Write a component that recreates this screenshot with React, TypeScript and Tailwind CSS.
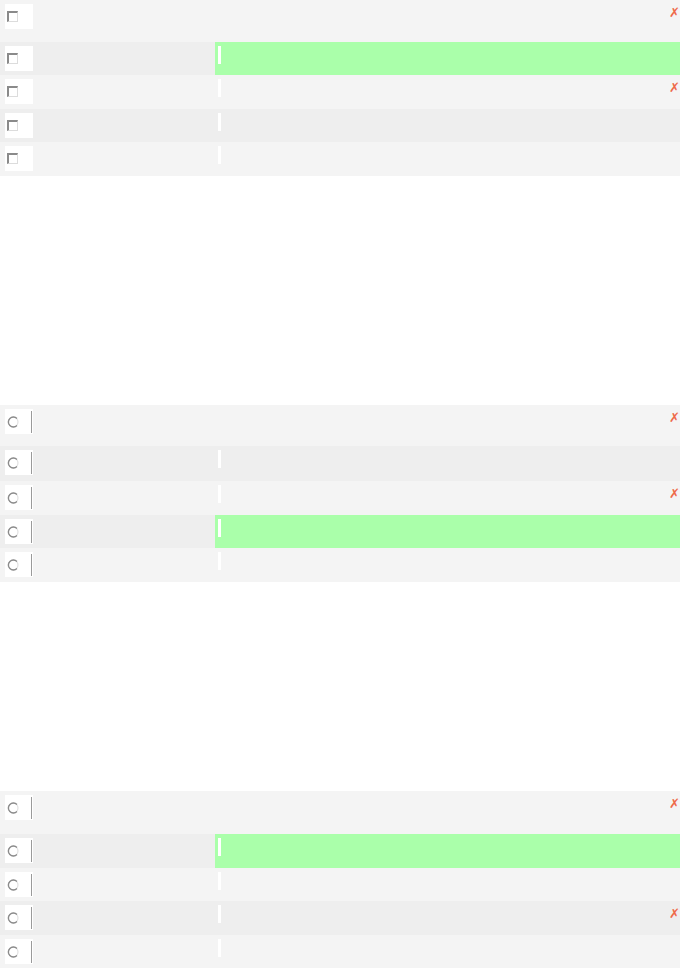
import React from 'react';

type Row = {
  h: number;
  green?: boolean;
  wrong?: boolean;
};

type Section = {
  kind: 'checkbox' | 'radio';
  mt: string;
  rows: Row[];
};

const sections: Section[] = [
  {
    kind: 'checkbox',
    mt: 'mt-0',
    rows: [{ h: 42, wrong: true }, { h: 33, green: true }, { h: 34, wrong: true }, { h: 33 }, { h: 34 }],
  },
  {
    kind: 'radio',
    mt: 'mt-[229px]',
    rows: [{ h: 41, wrong: true }, { h: 35 }, { h: 34, wrong: true }, { h: 33, green: true }, { h: 34 }],
  },
  {
    kind: 'radio',
    mt: 'mt-[209px]',
    rows: [{ h: 43, wrong: true }, { h: 34, green: true }, { h: 33 }, { h: 34, wrong: true }, { h: 33 }],
  },
];

const CheckBox = () => (
  <span className="block w-[11px] h-[11px] border-t-2 border-l-2 border-t-[#8a8a8a] border-l-[#8a8a8a] border-b border-r border-b-[#dcdcdc] border-r-[#dcdcdc] bg-white" />
);

const Radio = () => (
  <svg width="12" height="12" viewBox="0 0 12 12">
    <circle cx="6" cy="6" r="5" fill="white" stroke="#dcdcdc" strokeWidth="1" />
    <path d="M10 2.5 A5 5 0 1 0 10 9.5" fill="none" stroke="#8a8a8a" strokeWidth="1.3" />
  </svg>
);

const QuestionRow = ({ row, index, kind }: { row: Row; index: number; kind: Section['kind'] }) => {
  const bg = index % 2 === 0 ? 'bg-[#f4f4f4]' : 'bg-[#eeeeee]';
  return (
    <div className={`flex ${bg}`} style={{ height: row.h }}>
      <div className="w-[215px] shrink-0 pl-[5px] pt-[4px]">
        <div className="flex h-[25px] w-[28px] items-center bg-white pl-[2px]">
          {kind === 'checkbox' ? (
            <CheckBox />
          ) : (
            <>
              <Radio />
              <span className="ml-auto mr-px h-[22px] w-px bg-[#9a9a9a]" />
            </>
          )}
        </div>
      </div>
      <div className={`flex flex-1 items-start ${row.green ? 'bg-[#aaffaa]' : ''}`}>
        {index > 0 && <span className="ml-[3px] mt-[4px] h-[18px] w-[3px] bg-white" />}
        {row.wrong && (
          <span
            className="ml-auto mt-[6px] text-[13px] leading-none text-[#ee6a4a]"
            style={{ fontFamily: '"DejaVu Sans", sans-serif' }}
          >
            ✗
          </span>
        )}
      </div>
    </div>
  );
};

export default function App() {
  return (
    <div className="w-[680px] h-[968px] overflow-hidden bg-white" style={{ fontFamily: '"Liberation Sans", Arial, sans-serif' }}>
      {sections.map((s, si) => (
        <div key={si} className={s.mt}>
          {s.rows.map((r, ri) => (
            <QuestionRow key={ri} row={r} index={ri} kind={s.kind} />
          ))}
        </div>
      ))}
    </div>
  );
}
